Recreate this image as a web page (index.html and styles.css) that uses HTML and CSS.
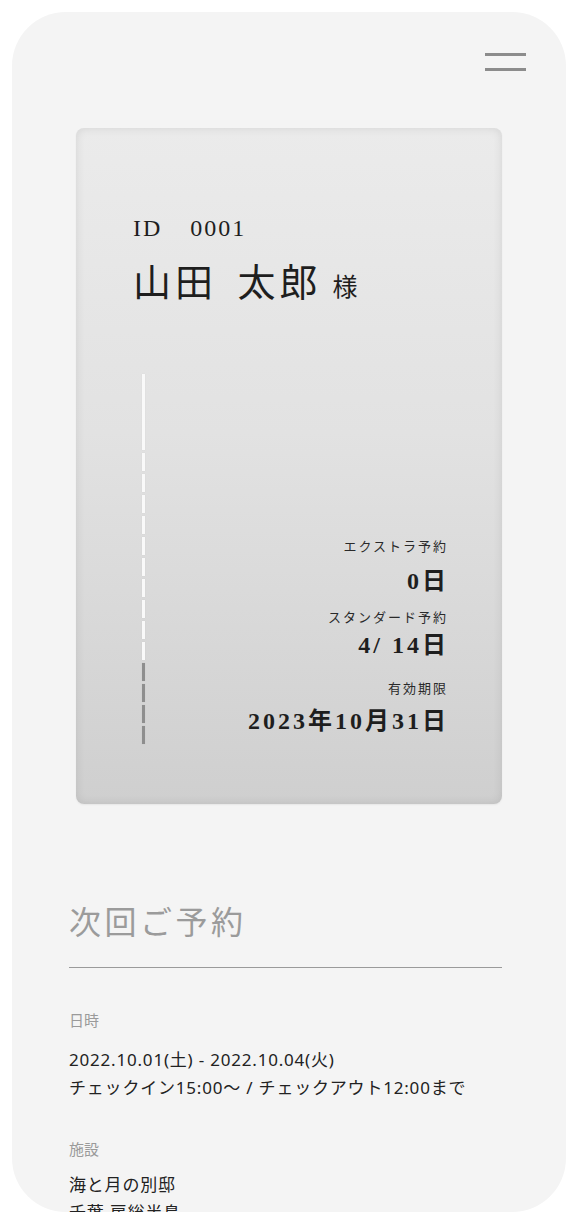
FILE: index.html
```html
<!DOCTYPE html>
<html lang="ja">
<head>
<meta charset="utf-8">
<title>会員証</title>
<link rel="stylesheet" href="styles.css">
</head>
<body>
<div class="page">
  <div class="phone">
    <header class="topbar">
      <button class="menu" aria-label="メニュー"><span></span><span></span></button>
    </header>

    <section class="card">
      <p class="member-id">ID<span class="id-num">0001</span></p>
      <p class="member-name">山田 太郎<span class="honor">様</span></p>

      <div class="card-body">
        <div class="progress">
          <span class="seg seg-long"></span>
          <span class="seg"></span><span class="seg"></span><span class="seg"></span><span class="seg"></span><span class="seg"></span>
          <span class="seg"></span><span class="seg"></span><span class="seg"></span><span class="seg"></span><span class="seg"></span>
          <span class="seg seg-used"></span><span class="seg seg-used"></span><span class="seg seg-used"></span><span class="seg seg-used"></span>
        </div>
        <div class="stats">
          <p class="stat-label">エクストラ予約</p>
          <p class="stat-value v1">0日</p>
          <p class="stat-label l2">スタンダード予約</p>
          <p class="stat-value v2">4/ 14日</p>
          <p class="stat-label l3">有効期限</p>
          <p class="stat-value v3">2023年10月31日</p>
        </div>
      </div>
    </section>

    <section class="next">
      <h2 class="next-title">次回ご予約</h2>
      <dl class="info">
        <dt class="info-label">日時</dt>
        <dd class="info-data">2022.10.01(土) - 2022.10.04(火)<br>チェックイン15:00〜 / チェックアウト12:00まで</dd>
        <dt class="info-label second">施設</dt>
        <dd class="info-data">海と月の別邸<br>千葉 房総半島</dd>
      </dl>
    </section>
  </div>
</div>
</body>
</html>
```

FILE: styles.css
```css
* { box-sizing: border-box; }
html, body { margin: 0; padding: 0; background: #ffffff; }
p, h2, dl, dt, dd { margin: 0; }

.page {
  padding: 12px;
}

.phone {
  width: 554px;
  height: 1200px;
  background: #f4f4f4;
  border-radius: 54px;
  overflow: hidden;
}

.topbar {
  display: flex;
  justify-content: flex-end;
  padding: 41px 40px 0 0;
  height: 116px;
}

.menu {
  display: flex;
  flex-direction: column;
  gap: 12px;
  width: 41px;
  padding: 0;
  border: 0;
  background: transparent;
}
.menu span {
  display: block;
  height: 3px;
  width: 41px;
  background: #8c8c8c;
}

.card {
  margin: 0 64px;
  height: 676px;
  border-radius: 8px;
  background: linear-gradient(to bottom, #ebebeb 0%, #e2e2e2 45%, #cfcfcf 100%);
  box-shadow: inset 0 0 10px rgba(0, 0, 0, 0.10), 0 1px 2px rgba(0, 0, 0, 0.06);
  padding: 85px 56px 0 57px;
  color: #1e1e1e;
}

.member-id {
  font-family: "Liberation Serif", "Noto Sans CJK JP", serif;
  font-size: 24px;
  line-height: 30px;
  letter-spacing: 2px;
}
.id-num { margin-left: 28px; }

.member-name {
  margin-top: 15px;
  height: 44px;
  font-family: "Noto Sans CJK JP", sans-serif;
  font-size: 38px;
  line-height: 44px;
  letter-spacing: 4px;
  word-spacing: 8px;
}
.honor {
  font-size: 25px;
  line-height: 1;
  margin-left: 11px;
  letter-spacing: 0;
}

.card-body {
  margin-top: 72px;
  display: flex;
  align-items: flex-end;
  justify-content: space-between;
}

.progress {
  margin-left: 9px;
  width: 3px;
  display: flex;
  flex-direction: column;
  gap: 3px;
}
.seg {
  display: block;
  width: 3px;
  height: 18px;
  background: #f9f9f9;
  box-shadow: 0 0 1px rgba(0, 0, 0, 0.15);
}
.seg-long { height: 76px; }
.seg-used { background: #8e8e8e; }

.stats {
  text-align: right;
  margin-bottom: 9px;
}
.stat-label {
  font-family: "Noto Sans CJK JP", sans-serif;
  font-size: 13px;
  line-height: 20px;
  letter-spacing: 2px;
  margin-right: -2px;
  color: #2a2a2a;
}
.stat-value {
  font-family: "Liberation Serif", "Noto Sans CJK JP", serif;
  font-weight: 700;
  font-size: 24px;
  line-height: 28px;
  letter-spacing: 3px;
  margin-right: -3px;
  color: #1e1e1e;
}
.v1 { margin-top: 11px; }
.l2 { margin-top: 12px; }
.v2 { margin-top: 4px; }
.l3 { margin-top: 19px; }
.v3 { margin-top: 9px; }

.next {
  padding: 94px 64px 0 57px;
}
.next-title {
  font-family: "Noto Sans CJK JP", sans-serif;
  font-weight: 400;
  font-size: 32px;
  line-height: 44px;
  letter-spacing: 3.5px;
  color: #9b9b9b;
  padding-bottom: 25px;
  border-bottom: 1px solid #9a9a9a;
}

.info {
  margin-top: 40px;
}
.info-label {
  font-family: "Noto Sans CJK JP", sans-serif;
  font-size: 15px;
  line-height: 24px;
  color: #9a9a9a;
  margin-bottom: 14px;
}
.info-label.second {
  margin-top: 35px;
  margin-bottom: 10px;
}
.info-data {
  font-family: "Noto Sans", "Noto Sans CJK JP", sans-serif;
  font-size: 17px;
  line-height: 28px;
  letter-spacing: 0.8px;
  color: #222222;
}
```
